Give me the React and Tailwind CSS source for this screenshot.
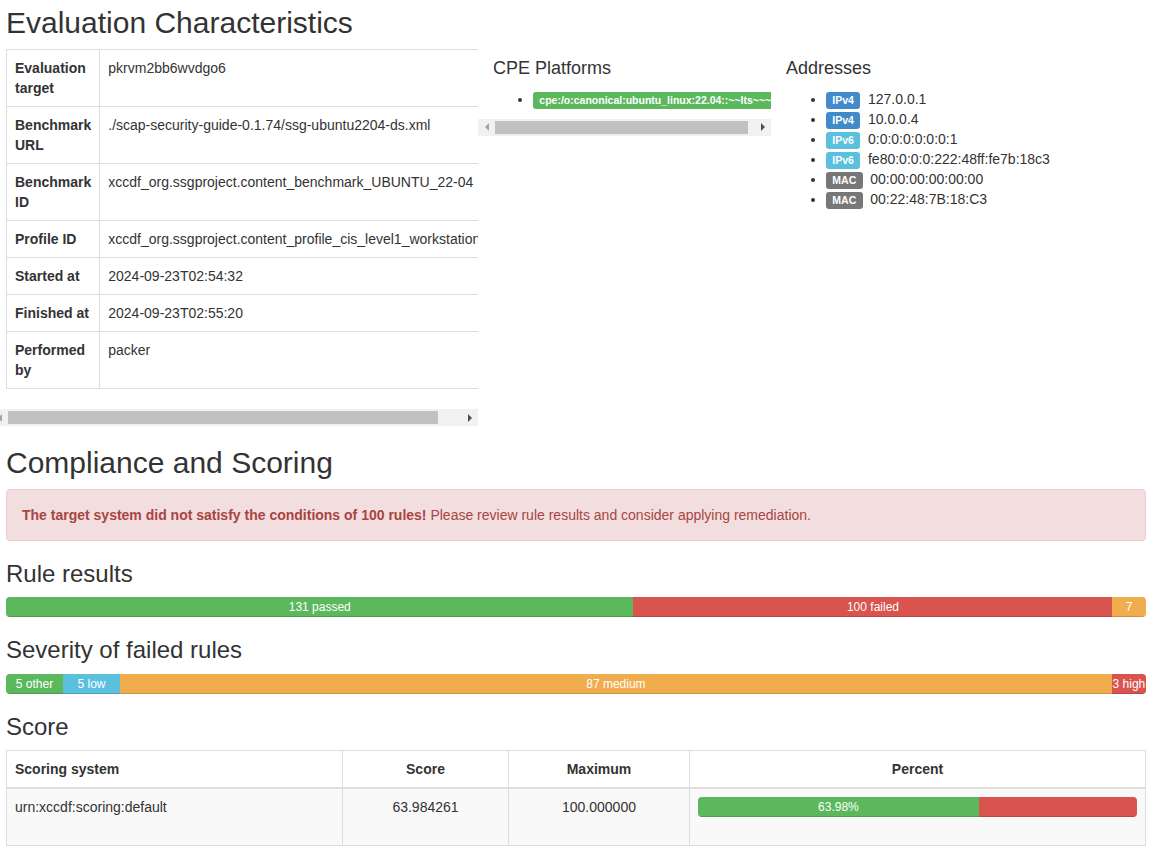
import React from "react";

const evalRows = [
  ["Evaluation target", "pkrvm2bb6wvdgo6"],
  ["Benchmark URL", "./scap-security-guide-0.1.74/ssg-ubuntu2204-ds.xml"],
  ["Benchmark ID", "xccdf_org.ssgproject.content_benchmark_UBUNTU_22-04"],
  ["Profile ID", "xccdf_org.ssgproject.content_profile_cis_level1_workstation"],
  ["Started at", "2024-09-23T02:54:32"],
  ["Finished at", "2024-09-23T02:55:20"],
  ["Performed by", "packer"],
];

const addresses = [
  ["IPv4", "bg-[#428bca]", "127.0.0.1"],
  ["IPv4", "bg-[#428bca]", "10.0.0.4"],
  ["IPv6", "bg-[#5bc0de]", "0:0:0:0:0:0:0:1"],
  ["IPv6", "bg-[#5bc0de]", "fe80:0:0:0:222:48ff:fe7b:18c3"],
  ["MAC", "bg-[#777777]", "00:00:00:00:00:00"],
  ["MAC", "bg-[#777777]", "00:22:48:7B:18:C3"],
];

function Label({ color, children }) {
  return (
    <span
      className={`${color} inline whitespace-nowrap rounded-[3px] px-[6.3px] pt-[2.1px] pb-[3.15px] align-baseline text-[10.5px] font-bold leading-none text-white`}
    >
      {children}
    </span>
  );
}

function Bar({ color, pct, children }) {
  return (
    <div
      className={`${color} h-full shrink-0 overflow-visible whitespace-nowrap text-center text-[12px] leading-[20px] text-white shadow-[inset_0_-1px_0_rgba(0,0,0,0.15)]`}
      style={{ width: pct + "%" }}
    >
      {children}
    </div>
  );
}

function Progress({ children }) {
  return (
    <div className="mb-[20px] flex h-[20px] overflow-hidden rounded-[4px] bg-[#f5f5f5] shadow-[inset_0_1px_2px_rgba(0,0,0,0.1)]">
      {children}
    </div>
  );
}

// horizontal scrollbar as the browser draws it (headless hides real ones)
function Scrollbar({ thumb }) {
  return (
    <div className="flex h-[17px] bg-[#f1f1f1]">
      <div className="flex w-[17px] shrink-0 items-center justify-center">
        <svg width="4" height="8" viewBox="0 0 4 8">
          <polygon points="4,0 0,4 4,8" fill="#a3a3a3" />
        </svg>
      </div>
      <div className="flex-1 pt-[2px]">
        <div className="h-[13px] bg-[#c1c1c1]" style={{ width: thumb }} />
      </div>
      <div className="flex w-[17px] shrink-0 items-center justify-center">
        <svg width="4" height="8" viewBox="0 0 4 8">
          <polygon points="0,0 4,4 0,8" fill="#505050" />
        </svg>
      </div>
    </div>
  );
}

export default function App() {
  return (
    <div className="min-h-screen overflow-hidden bg-white pl-[6px] pr-[7px] pt-[6px] font-['Liberation_Sans',Arial,sans-serif] text-[14px] leading-[20px] text-[#333]">
      <h2 className="mb-[10px] text-[30px] font-normal leading-[1.1]">Evaluation Characteristics</h2>

      <div className="flex items-start">
        {/* target info */}
        <div className="-ml-[15px] w-[487px] shrink-0">
          <div className="overflow-hidden pl-[15px]">
            <table className="mb-[20px] w-full border-collapse border border-[#ddd]">
              <tbody>
                {evalRows.map(([k, v]) => (
                  <tr key={k}>
                    <th className="border border-[#ddd] p-[8px] text-left align-top font-bold">{k}</th>
                    <td className="whitespace-nowrap border border-[#ddd] p-[8px] align-top">{v}</td>
                  </tr>
                ))}
              </tbody>
            </table>
          </div>
          <Scrollbar thumb={430} />
        </div>

        {/* CPE platforms */}
        <div className="w-[293px] shrink-0">
          <h4 className="mb-[10px] mt-[10px] pl-[15px] text-[18px] font-normal leading-[1.1]">CPE Platforms</h4>
          <div className="overflow-hidden">
            <ul className="mb-[10px] list-disc pl-[55px]">
              <li className="whitespace-nowrap">
                <Label color="bg-[#5cb85c]">cpe:/o:canonical:ubuntu_linux:22.04::~~lts~~~</Label>
              </li>
            </ul>
          </div>
          <Scrollbar thumb={253} />
        </div>

        {/* addresses */}
        <div className="flex-1 pl-[15px]">
          <h4 className="mb-[10px] mt-[10px] text-[18px] font-normal leading-[1.1]">Addresses</h4>
          <ul className="mb-[10px] list-disc pl-[40px]">
            {addresses.map(([t, c, a]) => (
              <li key={a}>
                <Label color={c}>{t}</Label>
                {"\u00a0 "}
                {a}
              </li>
            ))}
          </ul>
        </div>
      </div>

      <h2 className="mb-[10px] mt-[20px] text-[30px] font-normal leading-[1.1]">Compliance and Scoring</h2>
      <div className="mb-[20px] rounded-[4px] border border-[#ebccd1] bg-[#f2dede] p-[15px] text-[#a94442]">
        <strong>The target system did not satisfy the conditions of 100 rules!</strong> Please review rule results and
        consider applying remediation.
      </div>

      <h3 className="mb-[10px] mt-[20px] text-[24px] font-normal leading-[1.1]">Rule results</h3>
      <Progress>
        <Bar color="bg-[#5cb85c]" pct={(131 / 238) * 100}>131 passed</Bar>
        <Bar color="bg-[#d9534f]" pct={(100 / 238) * 100}>100 failed</Bar>
        <Bar color="bg-[#f0ad4e]" pct={(7 / 238) * 100}>7</Bar>
      </Progress>

      <h3 className="mb-[10px] mt-[20px] text-[24px] font-normal leading-[1.1]">Severity of failed rules</h3>
      <Progress>
        <Bar color="bg-[#5cb85c]" pct={5}>5 other</Bar>
        <Bar color="bg-[#5bc0de]" pct={5}>5 low</Bar>
        <Bar color="bg-[#f0ad4e]" pct={87}>87 medium</Bar>
        <Bar color="bg-[#d9534f]" pct={3}>3 high</Bar>
      </Progress>

      <h3 className="mb-[10px] mt-[20px] text-[24px] font-normal leading-[1.1]">Score</h3>
      <table className="mb-[20px] w-full border-collapse border border-[#ddd]">
        <thead>
          <tr>
            <th className="w-[336px] border border-b-2 border-[#ddd] p-[8px] text-left align-bottom font-bold">Scoring system</th>
            <th className="w-[166px] border border-b-2 border-[#ddd] p-[8px] text-center align-bottom font-bold">Score</th>
            <th className="w-[181px] border border-b-2 border-[#ddd] p-[8px] text-center align-bottom font-bold">Maximum</th>
            <th className="border border-b-2 border-[#ddd] p-[8px] text-center align-bottom font-bold">Percent</th>
          </tr>
        </thead>
        <tbody>
          <tr className="bg-[#f9f9f9]">
            <td className="border border-[#ddd] p-[8px] align-top">urn:xccdf:scoring:default</td>
            <td className="border border-[#ddd] p-[8px] text-center align-top">63.984261</td>
            <td className="border border-[#ddd] p-[8px] text-center align-top">100.000000</td>
            <td className="border border-[#ddd] p-[8px] align-top">
              <Progress>
                <Bar color="bg-[#5cb85c]" pct={63.984261}>63.98%</Bar>
                <Bar color="bg-[#d9534f]" pct={36.015739}></Bar>
              </Progress>
            </td>
          </tr>
        </tbody>
      </table>
    </div>
  );
}
